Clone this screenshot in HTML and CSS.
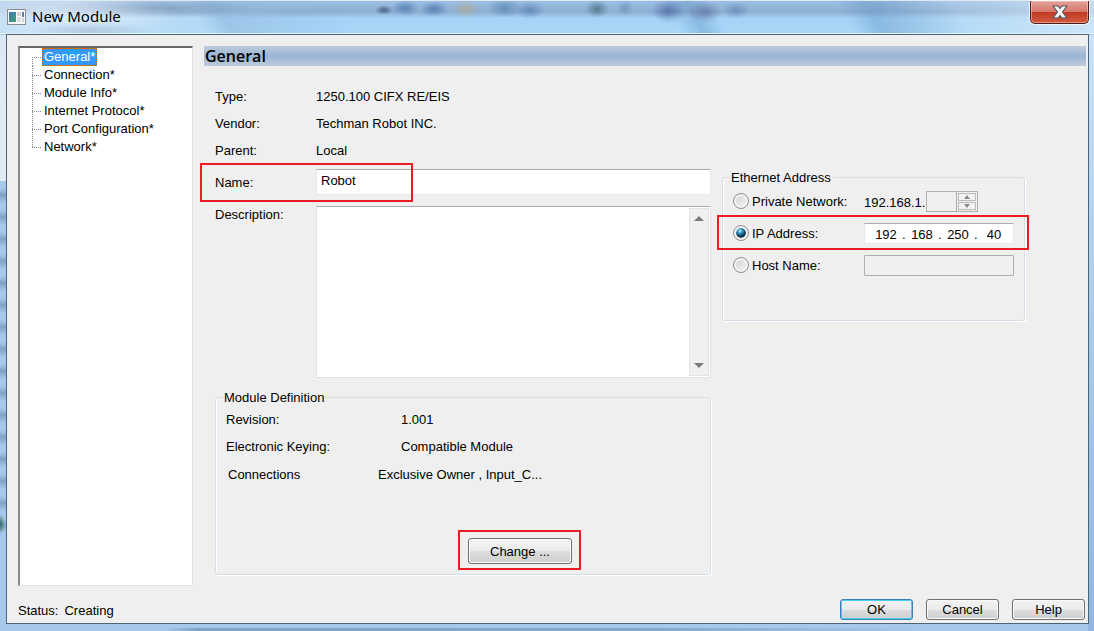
FILE: index.html
```html
<!DOCTYPE html>
<html lang="en">
<head>
    <meta charset="UTF-8">
    <meta name="viewport" content="width=device-width, initial-scale=1.0">
    <title>New Module</title>
    <link rel="stylesheet" href="styles.css">
</head>
<body>
    <div class="window">
        <header class="titlebar">
            <svg class="app-icon" width="19" height="16" viewBox="0 0 19 16" aria-hidden="true">
                <defs>
                    <linearGradient id="appGreen" x1="0" y1="0" x2="1" y2="1">
                        <stop offset="0" stop-color="#3c78b4"/>
                        <stop offset="1" stop-color="#46a070"/>
                    </linearGradient>
                </defs>
                <rect x=".5" y=".5" width="18" height="15" fill="#fafafa" stroke="#8a8f94"/>
                <rect x="2" y="3" width="7" height="10" fill="url(#appGreen)"/>
                <rect x="10" y="3" width="4" height="4" fill="#d2d4d6"/>
                <rect x="10" y="8" width="4" height="5" fill="#dcdee0"/>
                <rect x="15" y="3" width="2" height="5" fill="#5a80a8"/>
                <rect x="15" y="9" width="2" height="4" fill="#d2d4d6"/>
            </svg>
            <h1 class="title">New Module</h1>
            <button class="close" type="button" aria-label="Close">
                <svg width="16" height="14" viewBox="0 0 16 14" aria-hidden="true">
                    <path d="M1 1h5l2 2.500L10 1h5l-4.500 6L15 13h-5l-2-2.500L6 13H1l4.500-6z" fill="#f4f4f4" stroke="#50535f" stroke-width="1.200" stroke-linejoin="round"/>
                </svg>
            </button>
        </header>

        <form class="client">
            <div class="main">
                <nav class="tree">
                    <ul>
                        <li><a class="selected" href="#general">General*</a></li>
                        <li><a href="#connection">Connection*</a></li>
                        <li><a href="#info">Module Info*</a></li>
                        <li><a href="#protocol">Internet Protocol*</a></li>
                        <li><a href="#port">Port Configuration*</a></li>
                        <li><a href="#network">Network*</a></li>
                    </ul>
                </nav>

                <section class="pane" id="general">
                    <h2 class="pane-title">General</h2>
                    <div class="pane-body">
                        <div class="left">
                            <div class="row"><span class="label">Type:</span><span>1250.100 CIFX RE/EIS</span></div>
                            <div class="row"><span class="label">Vendor:</span><span>Techman Robot INC.</span></div>
                            <div class="row"><span class="label">Parent:</span><span>Local</span></div>
                            <div class="row name-row">
                                <label class="label" for="name">Name:</label>
                                <input class="field" id="name" type="text" value="Robot">
                                <span class="callout callout-name"></span>
                            </div>
                            <div class="row desc-row">
                                <label class="label" for="desc">Description:</label>
                                <div class="desc-box">
                                    <textarea id="desc"></textarea>
                                    <div class="scrollbar">
                                        <svg width="10" height="5" viewBox="0 0 10 5"><path d="M0 5l5-5 5 5z" fill="#7c7c7c"/></svg>
                                        <svg width="10" height="5" viewBox="0 0 10 5"><path d="M0 0l5 5 5-5z" fill="#7c7c7c"/></svg>
                                    </div>
                                </div>
                            </div>

                            <fieldset class="group definition">
                                <legend>Module Definition</legend>
                                <div class="row"><span class="def-label">Revision:</span><span>1.001</span></div>
                                <div class="row"><span class="def-label">Electronic Keying:</span><span>Compatible Module</span></div>
                                <div class="row connections"><span class="conn-label">Connections</span><span>Exclusive Owner , Input_C...</span></div>
                                <div class="change">
                                    <button class="btn btn-change" type="button">Change ...</button>
                                    <span class="callout callout-change"></span>
                                </div>
                            </fieldset>
                        </div>

                        <fieldset class="group ethernet">
                            <legend>Ethernet Address</legend>
                            <div class="option">
                                <input type="radio" name="address" id="private">
                                <label for="private">Private Network:</label>
                                <span class="prefix">192.168.1.</span>
                                <input class="octet-private" type="text" aria-label="Last octet" disabled>
                                <div class="spinner">
                                    <button type="button" aria-label="Up" disabled><svg width="6" height="4" viewBox="0 0 6 4"><path d="M0 4l3-4 3 4z" fill="#888"/></svg></button>
                                    <button type="button" aria-label="Down" disabled><svg width="6" height="4" viewBox="0 0 6 4"><path d="M0 0l3 4 3-4z" fill="#888"/></svg></button>
                                </div>
                            </div>
                            <div class="option">
                                <input type="radio" name="address" id="ip" checked>
                                <label for="ip">IP Address:</label>
                                <div class="ip">
                                    <input type="text" value="192" aria-label="Octet 1"><span>.</span>
                                    <input type="text" value="168" aria-label="Octet 2"><span>.</span>
                                    <input type="text" value="250" aria-label="Octet 3"><span>.</span>
                                    <input type="text" value="40" aria-label="Octet 4">
                                </div>
                                <span class="callout callout-ip"></span>
                            </div>
                            <div class="option">
                                <input type="radio" name="address" id="host">
                                <label for="host">Host Name:</label>
                                <input class="host" type="text" aria-label="Host name" disabled>
                            </div>
                        </fieldset>
                    </div>
                </section>
            </div>

            <footer class="footer">
                <p class="status"><span>Status:</span><span>Creating</span></p>
                <button class="btn btn-default" type="submit">OK</button>
                <button class="btn" type="button">Cancel</button>
                <button class="btn" type="button">Help</button>
            </footer>
        </form>
    </div>
</body>
</html>
```
FILE: styles.css
```css
* {
    box-sizing: border-box;
}
body {
    margin: 0;
    font-family: "Liberation Sans", Arial, sans-serif;
    font-size: 13px;
    line-height: 16px;
    color: #000;
}
h1, h2, p, ul {
    margin: 0;
    padding: 0;
}
input, textarea, button {
    font: inherit;
    color: inherit;
    margin: 0;
}

/* glass frame */
.window {
    display: flex;
    flex-direction: column;
    min-height: 100vh;
    padding: 0 5px 7px 6px;
    border-top: 1px solid #dfe9f2;
    background:
        radial-gradient(ellipse 5px 10px at 0 523px, #2f6e62, transparent),
        linear-gradient(90deg, transparent 15%, #7fa3c8 18%, #86a9cf 60%, transparent 85%) 0 100% / 100% 3px no-repeat,
        repeating-linear-gradient(transparent 0 7px, rgba(75, 105, 140, 0.4) 14px, transparent 22px) 0 180px / 6px 352px no-repeat,
        linear-gradient(#dce9f5, #e2ebf4) 0 34px / 6px 146px no-repeat,
        linear-gradient(#cbe2f7, #b4d2f0 30%, #8fb4de) 100% 34px / 6px 100% no-repeat,
        #a6c8ea;
}
.titlebar {
    display: flex;
    align-items: flex-start;
    height: 33px;
    margin: 0 -5px 0 -6px;
    padding: 0 5px 0 7px;
    border-bottom: 1px solid #e4f4fd;
    background:
        radial-gradient(ellipse 9px 5px at 384px 9px, rgba(45, 65, 95, 0.7), transparent),
        radial-gradient(ellipse 14px 8px at 405px 7px, rgba(35, 85, 145, 0.5), transparent),
        radial-gradient(ellipse 14px 8px at 434px 8px, rgba(35, 85, 145, 0.5), transparent),
        radial-gradient(ellipse 13px 9px at 466px 8px, rgba(190, 165, 110, 0.5), transparent),
        radial-gradient(ellipse 18px 10px at 505px 7px, rgba(60, 110, 150, 0.5), transparent),
        radial-gradient(ellipse 15px 9px at 530px 9px, rgba(35, 85, 145, 0.4), transparent),
        radial-gradient(ellipse 12px 9px at 597px 8px, rgba(30, 75, 80, 0.5), transparent),
        radial-gradient(ellipse 8px 8px at 625px 7px, rgba(60, 90, 130, 0.3), transparent),
        radial-gradient(ellipse 17px 12px at 668px 10px, rgba(40, 65, 130, 0.5), transparent),
        radial-gradient(ellipse 17px 11px at 705px 11px, rgba(70, 70, 120, 0.4), transparent),
        radial-gradient(ellipse 14px 9px at 736px 9px, rgba(45, 75, 120, 0.3), transparent),
        radial-gradient(ellipse 100px 24px at 80px 16px, rgba(240, 246, 252, 0.6), transparent),
        radial-gradient(ellipse 60px 8px at 90px 29px, rgba(100, 130, 165, 0.4), transparent),
        radial-gradient(ellipse 100px 10px at 150px 7px, rgba(90, 125, 165, 0.5), transparent),
        linear-gradient(60deg, transparent 180px, rgba(110, 155, 200, 0.3) 200px, transparent 310px),
        linear-gradient(60deg, transparent 590px, rgba(95, 145, 190, 0.4) 610px, transparent 630px),
        linear-gradient(60deg, transparent 740px, rgba(95, 145, 190, 0.4) 765px, transparent 840px),
        linear-gradient(90deg, rgba(210, 228, 245, 0.7), transparent 30%, transparent 80%, rgba(220, 235, 248, 0.7)),
        linear-gradient(#9dbfe5, #8caed2 11px, #a5d3f6 17px, #a8d8f8);
}
.app-icon {
    margin-top: 8px;
}
.title {
    flex: 1;
    margin: 5px 0 0 6px;
    font-family: "Noto Sans", "Open Sans", sans-serif;
    font-size: 15px;
    font-weight: 400;
    line-height: 20px;
}
.close {
    display: flex;
    align-items: center;
    justify-content: center;
    width: 59px;
    height: 23px;
    padding: 0;
    border: 1px solid #4c1b1b;
    border-top: 0;
    border-radius: 0 0 5px 5px;
    background: linear-gradient(#e3a097, #d6776a 11px, #c03a22 11px, #d05a40);
    box-shadow: 0 0 0 1px rgba(255, 255, 255, 0.7), inset 0 0 0 1px rgba(255, 210, 200, 0.5);
}

.client {
    flex: 1;
    display: flex;
    flex-direction: column;
    padding: 11px 2px 3px 11px;
    border: 1px solid #4a6578;
    background: #efefef;
}
.main {
    flex: 1;
    display: flex;
    gap: 11px;
}

/* page tree */
.tree {
    width: 175px;
    padding-left: 12px;
    border: 1px solid #e3e3e3;
    border-top: 2px solid #696969;
    border-left: 2px solid #8a8a8a;
    background: #fff;
}
.tree ul {
    list-style: none;
}
.tree li {
    display: flex;
    align-items: center;
    height: 18px;
    background: repeating-linear-gradient(#888 0 1px, transparent 1px 2px) 0 0 / 1px 18px no-repeat;
}
.tree li:first-child {
    background-position: 0 9px;
}
.tree li:last-child {
    background-size: 1px 9px;
}
.tree li::before {
    content: "";
    width: 10px;
    height: 1px;
    background: repeating-linear-gradient(90deg, #888 0 1px, transparent 1px 2px);
}
.tree a {
    padding: 0 1px;
    border: 1px solid transparent;
    color: #000;
    text-decoration: none;
}
.tree a.selected {
    border: 1px dotted #c66a00;
    background: #3399ff;
    color: #fff;
}

/* property page */
.pane {
    flex: 1;
}
.pane-title {
    height: 20px;
    padding-left: 1px;
    background: linear-gradient(#bfcbdb, #9ab5d4 50%, #bfcbdb);
    font-family: "Open Sans", sans-serif;
    font-size: 16px;
    font-weight: 600;
    line-height: 20px;
}
.pane-body {
    display: flex;
    align-items: flex-start;
    gap: 11px;
    padding: 17px 61px 0 11px;
}
.left {
    flex: 1;
}
.row {
    display: flex;
    align-items: center;
    height: 27px;
}
.label {
    width: 101px;
}
.name-row {
    position: relative;
    height: 26px;
    margin-top: 5px;
}
.name-row .label,
.desc-row .label {
    padding-top: 1px;
}
.field {
    flex: 1;
    height: 26px;
    padding: 0 4px 4px;
    border: 1px solid #e3e9ef;
    border-top-color: #abadb3;
    background: #fff;
}
.desc-row {
    height: 172px;
    margin: 11px 0;
    align-items: flex-start;
}
.desc-box {
    flex: 1;
    display: flex;
    height: 172px;
    padding: 1px;
    border: 1px solid #dbe3ec;
    border-top-color: #abadb3;
    background: #fff;
}
.desc-box textarea {
    flex: 1;
    border: 0;
    resize: none;
    background: #fff;
}
.scrollbar {
    display: flex;
    flex-direction: column;
    align-items: center;
    justify-content: space-between;
    width: 20px;
    padding: 7px 1px 7px 0;
    border: 1px solid #e4e4e4;
    background: #f0f0f0;
}

.group {
    min-width: 0;
    margin: 0;
    padding: 0 10px;
    border: 1px solid #d5dfe9;
    border-radius: 3px;
    box-shadow: inset 1px 0 #fff, 1px 1px #fff;
}
.group legend {
    margin-left: -3px;
    padding: 1px 1px 0;
    line-height: 15px;
}
.definition {
    height: 186px;
}
.definition .row {
    padding-top: 2px;
}
.def-label {
    width: 175px;
}
.definition .connections {
    height: 28px;
    padding: 3px 0 0 2px;
}
.conn-label {
    width: 150px;
}
.change {
    position: relative;
    width: 104px;
    margin: 51px 0 0 242px;
}

.ethernet {
    width: 303px;
    height: 152px;
    margin-top: 86px;
}
.ethernet legend {
    margin-left: -4px;
    padding: 1px 2px 0;
}
.option {
    position: relative;
    display: flex;
    align-items: center;
    height: 32px;
}
.option label {
    width: 112px;
    margin-left: 3px;
    padding-top: 2px;
}
input[type="radio"] {
    appearance: none;
    width: 16px;
    height: 16px;
    border: 1px solid #8e8f8f;
    border-radius: 50%;
    background: linear-gradient(135deg, #cdd0d4, #f6f6f6);
    box-shadow: inset 0 0 0 2px #f4f4f4;
}
input[type="radio"]:checked {
    background: radial-gradient(circle at 4px 3px, #c4f0fb 0, #3aa6d0 2px, #0b3c5c 5px, #0b3350 6px);
    background-clip: content-box;
    background-origin: content-box;
    padding: 2px;
    box-shadow: inset 0 0 0 2px #eef0f1;
}
.prefix {
    width: 62px;
    padding-top: 4px;
}
.octet-private {
    width: 31px;
    height: 21px;
    border: 1px solid #afafaf;
    background: #efefef;
}
.spinner {
    display: flex;
    flex-direction: column;
    width: 21px;
    height: 21px;
    padding: 1px;
    border: 1px solid #afafaf;
    border-left: 0;
    gap: 1px;
}
.spinner button {
    flex: 1;
    display: flex;
    align-items: center;
    justify-content: center;
    padding: 0;
    border: 1px solid #bcbcbc;
    background: #f2f2f2;
}
.ip {
    display: flex;
    width: 150px;
    height: 21px;
    padding-left: 5px;
    border: 1px solid #e3e9ef;
    border-top-color: #abadb3;
    background: #fff;
    line-height: 21px;
}
.ip input {
    width: 32px;
    padding: 2px 0 0;
    border: 0;
    background: none;
    text-align: center;
}
.ip span {
    width: 4px;
}
.host {
    width: 150px;
    height: 21px;
    border: 1px solid #afafaf;
    border-radius: 1px;
    background: #efefef;
}

/* red markers */
.callout {
    position: absolute;
    border: 2px solid #ed1c24;
    pointer-events: none;
}
.callout-name {
    top: -6px;
    left: -15px;
    width: 213px;
    height: 39px;
}
.callout-change {
    inset: -8px -9px -6px -10px;
}
.callout-ip {
    inset: -2px -15px -1px -16px;
}

.btn {
    width: 73px;
    height: 21px;
    padding: 0;
    border: 1px solid #707070;
    border-radius: 3px;
    background: linear-gradient(#f3f3f3, #ebebeb 50%, #dddddd 50%, #cfcfcf);
    box-shadow: inset 0 0 0 1px #fafafa;
    line-height: 19px;
}
.btn-change {
    width: 104px;
    height: 26px;
}
.btn-default {
    border-color: #3c7fb1;
    box-shadow: inset 0 0 0 1px #46d0f8;
}
.footer {
    display: flex;
    align-items: center;
    gap: 13px;
    padding: 13px 1px 0 0;
}
.status {
    flex: 1;
    display: flex;
    gap: 6px;
    padding-top: 2px;
}
```
